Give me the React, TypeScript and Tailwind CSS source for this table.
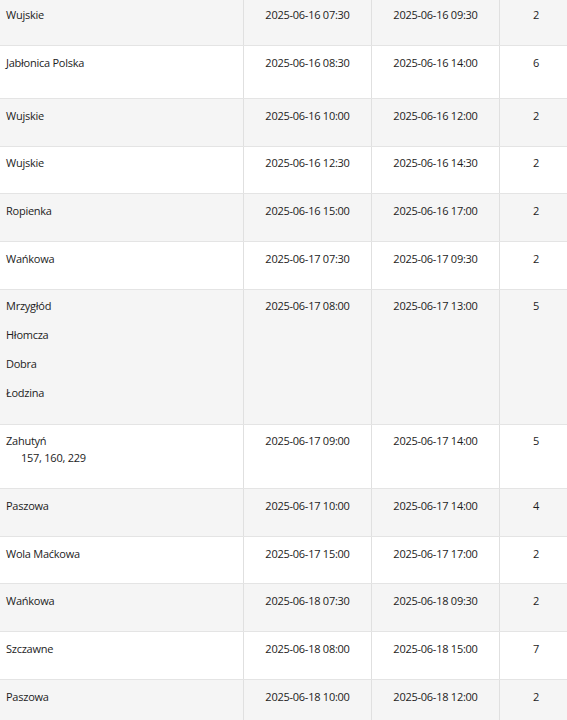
type Row = {
  places: string[];
  extra?: string;
  start: string;
  end: string;
  count: number;
  h: string;
  pt: string;
};

const rows: Row[] = [
  { places: ["Wujskie"], start: "2025-06-16 07:30", end: "2025-06-16 09:30", count: 2, h: "h-[46px]", pt: "pt-[6px]" },
  { places: ["Jabłonica Polska"], start: "2025-06-16 08:30", end: "2025-06-16 14:00", count: 6, h: "h-[53px]", pt: "pt-[8px]" },
  { places: ["Wujskie"], start: "2025-06-16 10:00", end: "2025-06-16 12:00", count: 2, h: "h-[48px]", pt: "pt-[8px]" },
  { places: ["Wujskie"], start: "2025-06-16 12:30", end: "2025-06-16 14:30", count: 2, h: "h-[47px]", pt: "pt-[7px]" },
  { places: ["Ropienka"], start: "2025-06-16 15:00", end: "2025-06-16 17:00", count: 2, h: "h-[48px]", pt: "pt-[8px]" },
  { places: ["Wańkowa"], start: "2025-06-17 07:30", end: "2025-06-17 09:30", count: 2, h: "h-[48px]", pt: "pt-[8px]" },
  { places: ["Mrzygłód", "Hłomcza", "Dobra", "Łodzina"], start: "2025-06-17 08:00", end: "2025-06-17 13:00", count: 5, h: "h-[135px]", pt: "pt-[7px]" },
  { places: ["Zahutyń"], extra: "157, 160, 229", start: "2025-06-17 09:00", end: "2025-06-17 14:00", count: 5, h: "h-[64px]", pt: "pt-[7px]" },
  { places: ["Paszowa"], start: "2025-06-17 10:00", end: "2025-06-17 14:00", count: 4, h: "h-[48px]", pt: "pt-[8px]" },
  { places: ["Wola Maćkowa"], start: "2025-06-17 15:00", end: "2025-06-17 17:00", count: 2, h: "h-[47px]", pt: "pt-[8px]" },
  { places: ["Wańkowa"], start: "2025-06-18 07:30", end: "2025-06-18 09:30", count: 2, h: "h-[48px]", pt: "pt-[8px]" },
  { places: ["Szczawne"], start: "2025-06-18 08:00", end: "2025-06-18 15:00", count: 7, h: "h-[48px]", pt: "pt-[8px]" },
  { places: ["Paszowa"], start: "2025-06-18 10:00", end: "2025-06-18 12:00", count: 2, h: "h-[48px]", pt: "pt-[8px]" },
];

export default function App() {
  return (
    <div className="w-[567px] h-[720px] overflow-hidden bg-white">
      <div
        className="w-[572px] text-[11px] leading-[18px] tracking-[-0.25px] text-[#1c1c1c]"
        style={{ fontFamily: '"Open Sans", "Noto Sans", sans-serif' }}
      >
        {rows.map((row, i) => (
          <div
            key={i}
            className={`grid grid-cols-[244px_128px_128px_72px] border-b border-[#e4e4e4] ${row.h} ${
              i % 2 === 0 ? "bg-[#f5f5f5]" : "bg-white"
            }`}
          >
            <div className={`border-r border-[#e0e0e0] pl-[6px] ${row.pt}`}>
              {row.places.map((p, j) => (
                <div key={j} className={j < row.places.length - 1 ? "mb-[11px]" : ""}>
                  {p}
                </div>
              ))}
              {row.extra && <div className="pl-[15px] -mt-px leading-[17px]">{row.extra}</div>}
            </div>
            <div className={`border-r border-[#e0e0e0] text-center ${row.pt}`}>{row.start}</div>
            <div className={`border-r border-[#e0e0e0] text-center ${row.pt}`}>{row.end}</div>
            <div className={`text-center ${row.pt}`}>{row.count}</div>
          </div>
        ))}
      </div>
    </div>
  );
}
